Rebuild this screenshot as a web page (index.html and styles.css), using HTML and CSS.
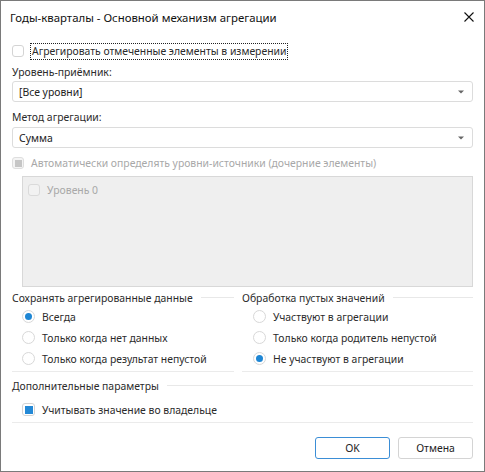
FILE: index.html
```html
<!DOCTYPE html>
<html lang="ru">
<head>
<meta charset="utf-8">
<title>Годы-кварталы</title>
<link rel="stylesheet" href="styles.css">
</head>
<body>
<div class="window">
  <div class="titlebar">
    <span class="title">Годы-кварталы - Основной механизм агрегации</span>
    <svg class="close" width="10" height="10" viewBox="0 0 10 10"><path d="M0.5 0.5L9.5 9.5M9.5 0.5L0.5 9.5" stroke="#111" stroke-width="1.1" fill="none"/></svg>
  </div>
  <div class="content">
    <div class="row cb-row first">
      <span class="cb"></span>
      <span class="lbl focus">Агрегировать отмеченные элементы в измерении</span>
    </div>
    <div class="row caption c1">Уровень-приёмник:</div>
    <div class="combo m1">
      <span>[Все уровни]</span>
      <svg class="arrow" width="6" height="4" viewBox="0 0 6 4"><path d="M0 0.5H6L3 3.5Z" fill="#666"/></svg>
    </div>
    <div class="row caption c2">Метод агрегации:</div>
    <div class="combo m2">
      <span>Сумма</span>
      <svg class="arrow" width="6" height="4" viewBox="0 0 6 4"><path d="M0 0.5H6L3 3.5Z" fill="#666"/></svg>
    </div>
    <div class="row cb-row dis c3">
      <span class="cb cb-dis"><span class="ind"></span></span>
      <span class="lbl">Автоматически определять уровни-источники (дочерние элементы)</span>
    </div>
    <div class="listbox">
      <div class="row cb-row dis">
        <span class="cb cb-dis2"></span>
        <span class="lbl">Уровень 0</span>
      </div>
    </div>
    <div class="groups">
      <div class="group">
        <div class="ghead"><span>Сохранять агрегированные данные</span><i class="gline"></i></div>
        <div class="opt left"><span class="radio on"></span><span>Всегда</span></div>
        <div class="opt left"><span class="radio"></span><span>Только когда нет данных</span></div>
        <div class="opt left"><span class="radio"></span><span>Только когда результат непустой</span></div>
        <div class="sep"></div>
      </div>
      <div class="group">
        <div class="ghead"><span>Обработка пустых значений</span><i class="gline"></i></div>
        <div class="opt right"><span class="radio"></span><span>Участвуют в агрегации</span></div>
        <div class="opt right"><span class="radio"></span><span>Только когда родитель непустой</span></div>
        <div class="opt right"><span class="radio on"></span><span>Не участвуют в агрегации</span></div>
        <div class="sep"></div>
      </div>
    </div>
    <div class="ghead extra"><span>Дополнительные параметры</span><i class="gline"></i></div>
    <div class="opt left"><span class="cb cb-on"><span class="ind"></span></span><span>Учитывать значение во владельце</span></div>
    <div class="sep full"></div>
    <div class="buttons">
      <button class="btn ok">OK</button>
      <button class="btn">Отмена</button>
    </div>
  </div>
</div>
</body>
</html>
```
FILE: styles.css
```css
* { box-sizing: border-box; }
html, body { margin: 0; padding: 0; background: #fff; }
body {
  font-family: "Noto Sans", "Open Sans", sans-serif;
  font-size: 10.4px;
  color: #2b2b2b;
}
.window {
  width: 485px;
  height: 472px;
  border: 1px solid #7a7a7a;
  display: flex;
  flex-direction: column;
  background: #fff;
}
.titlebar {
  height: 33px;
  display: flex;
  align-items: center;
  justify-content: space-between;
  padding: 0 10px 0 9px;
}
.title {
  font-size: 11.4px;
  color: #111;
  margin-top: -1px;
}
.close { margin-top: -1px; }
.content {
  padding: 0 11px 0 11px;
  display: flex;
  flex-direction: column;
}
.row {
  height: 16px;
  display: flex;
  align-items: center;
  line-height: 16px;
}
.first { margin-top: 9px; }
.c1 { margin-top: 5px; }
.c2 { margin-top: 7px; }
.c3 { margin-top: 7px; }
.cb {
  width: 12px;
  height: 12px;
  border: 1px solid #d4d4d4;
  border-radius: 3px;
  background: #fff;
  display: flex;
  align-items: center;
  justify-content: center;
  flex: none;
}
.cb-row .lbl { margin-left: 7px; }
.first .lbl { margin-left: 7px; padding: 0 1px; }
.focus {
  outline: 1px dotted #222;
  outline-offset: 0;
  line-height: 15px;
}
.combo {
  height: 21px;
  border: 1px solid #dcdcdc;
  border-radius: 3px;
  display: flex;
  align-items: center;
  justify-content: space-between;
  padding: 0 8px 0 6px;
  color: #222;
}
.m1 { margin-top: 1px; }
.m2 { margin-top: 2px; }
.arrow { margin-top: 1px; }
.dis { color: #a8a8a8; }
.cb-dis { background: #f4f4f4; border-color: #dedede; }
.cb-dis .ind { width: 7px; height: 7px; background: #c6c6c6; }
.cb-dis2 { background: #f2f2f2; border-color: #dadada; }
.listbox {
  margin: 5px 0 0 10px;
  height: 111px;
  background: #efefef;
  border: 1px solid #d8d8d8;
  padding: 5px 0 0 5px;
}
.groups {
  display: grid;
  grid-template-columns: 222px 1fr;
  column-gap: 8px;
  margin-top: 3px;
}
.ghead {
  height: 16px;
  display: flex;
  align-items: center;
}
.gline {
  flex: 1;
  height: 1px;
  background: #e8e8e8;
  margin-left: 8px;
  margin-top: -1px;
}
.opt {
  height: 21px;
  display: flex;
  align-items: center;
}
.opt.left { padding-left: 10px; }
.opt.right { padding-left: 11px; }
.opt > span:last-child { margin-left: 7px; }
.radio {
  width: 13px;
  height: 13px;
  border-radius: 50%;
  border: 1px solid #d8d8d8;
  background: #fff;
  flex: none;
  position: relative;
}
.radio.on::after {
  content: "";
  position: absolute;
  left: 2px; top: 2px;
  width: 7px; height: 7px;
  border-radius: 50%;
  background: #1e86d4;
}
.sep {
  height: 1px;
  background: #ebebeb;
  margin-top: 2px;
}
.extra { margin-top: 6px; margin-bottom: 5px; }
.cb-on { width: 13px; height: 13px; }
.cb-on .ind { width: 8px; height: 8px; background: #2489d6; }
.full { margin-top: 2px; }
.buttons {
  display: flex;
  justify-content: flex-end;
  gap: 8px;
  margin-top: 14px;
}
.btn {
  width: 75px;
  height: 22px;
  border: 1px solid #d4d4d4;
  border-radius: 3px;
  background: #fff;
  font-family: "Noto Sans", "Open Sans", sans-serif;
  font-size: 10.4px;
  color: #222;
  padding: 0;
}
.btn.ok { border-color: #3b8ed6; }
```
